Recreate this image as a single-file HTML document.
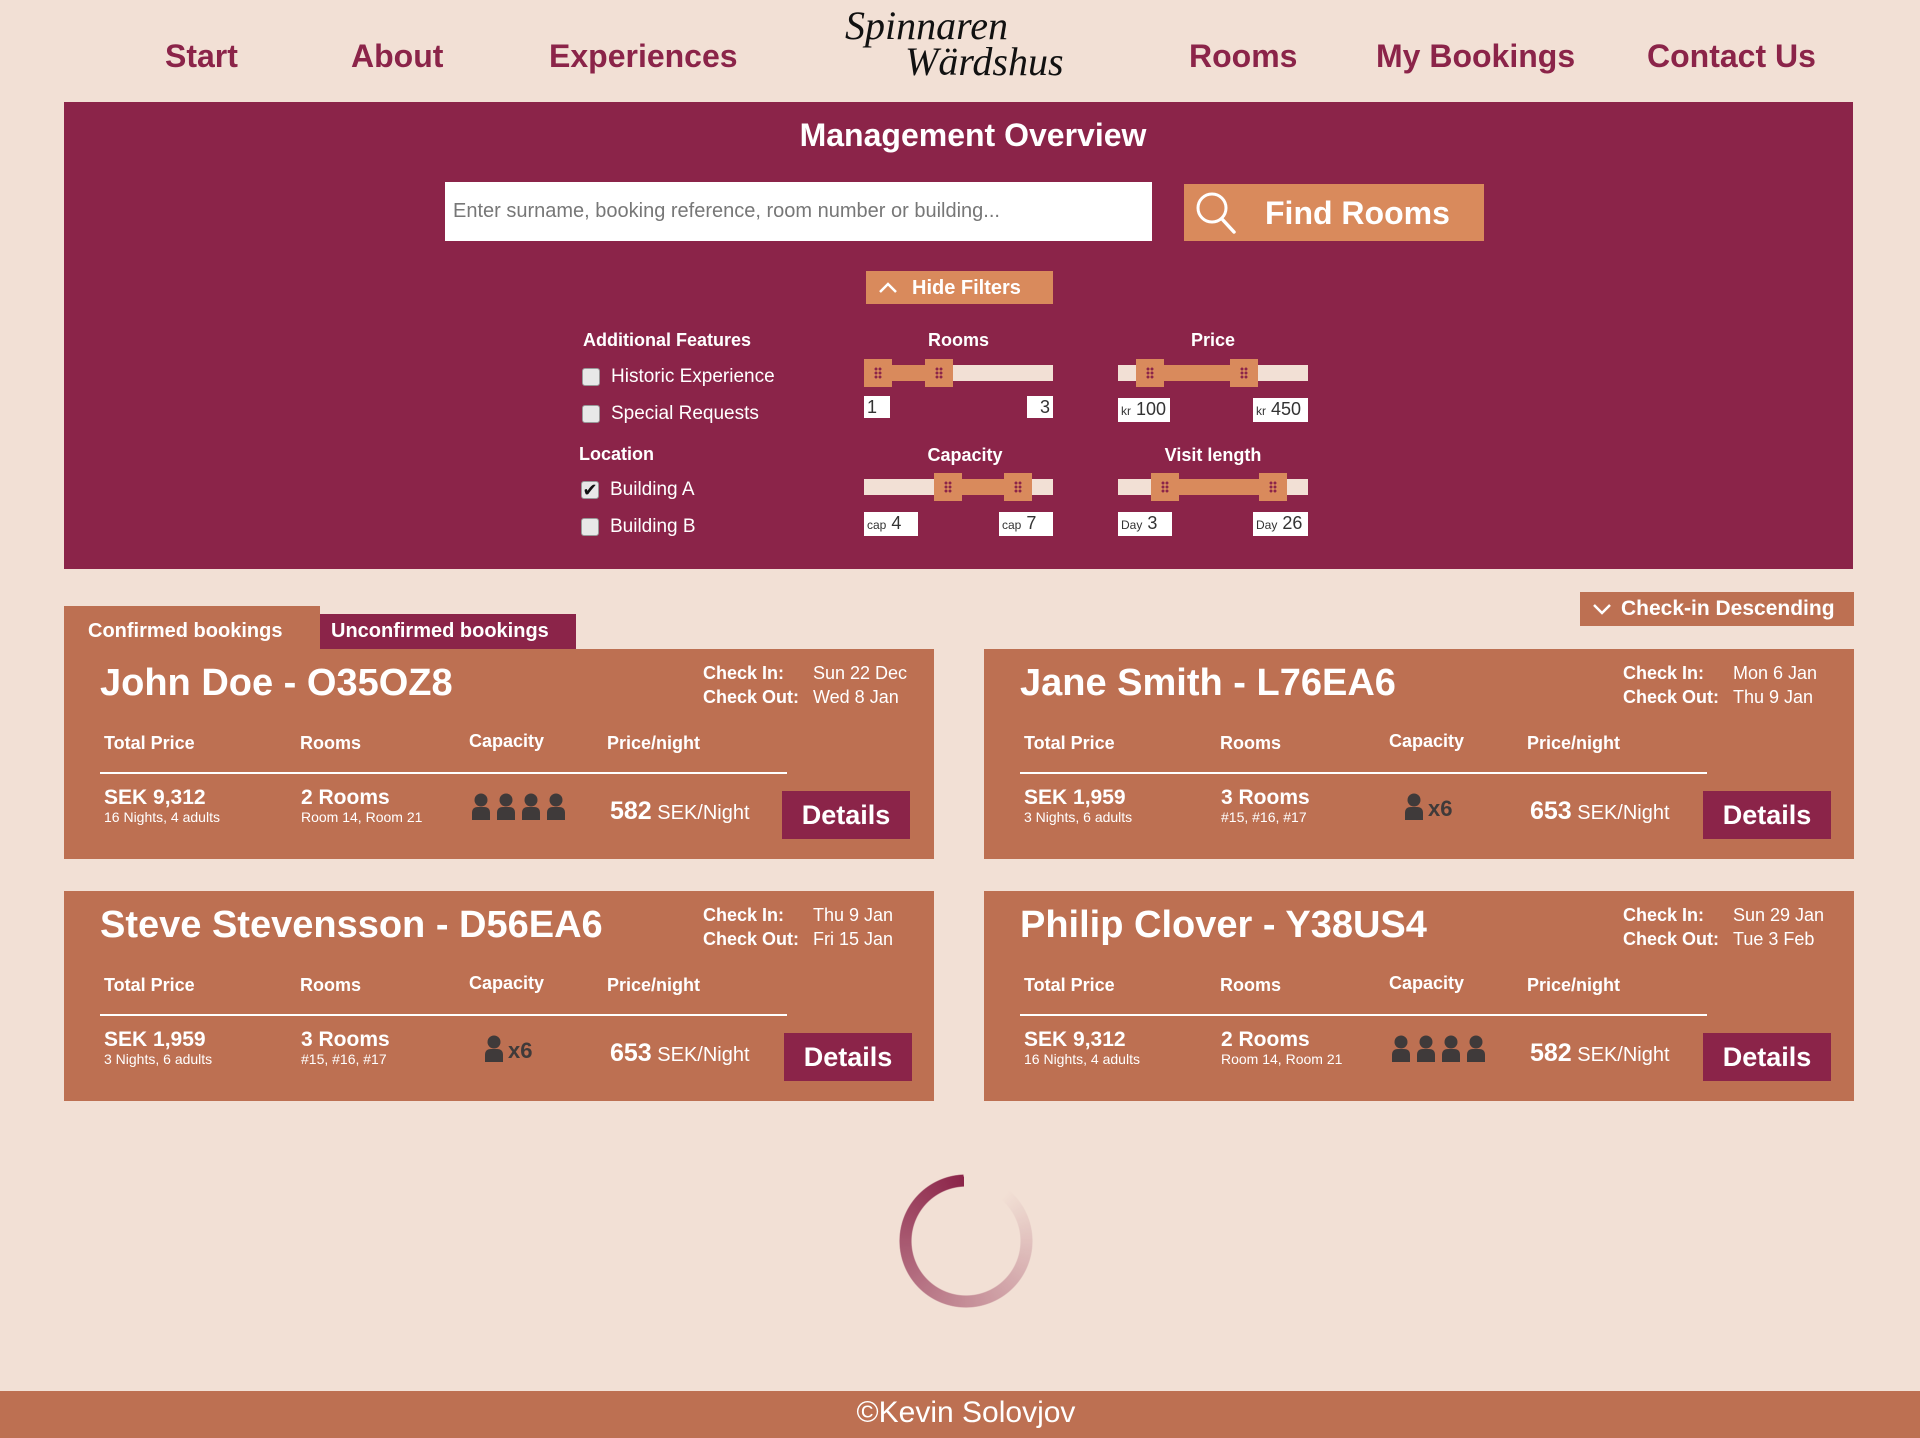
<!DOCTYPE html>
<html><head><meta charset="utf-8">
<style>
*{margin:0;padding:0;box-sizing:border-box}
body{width:1920px;height:1438px;background:#f2e0d5;font-family:"Liberation Sans",sans-serif;position:relative;overflow:hidden}
.a{position:absolute;white-space:nowrap}
.nav{color:#8b2449;font-size:32px;font-weight:bold;top:36px;line-height:40px}
.panel{left:64px;top:102px;width:1789px;height:467px;background:#8b2449}
.w{color:#fff}
.lbl{color:#fff;font-size:18px;font-weight:bold;line-height:22px}
.cb{width:18px;height:18px;background:#e8e8e8;border:1px solid #999;border-radius:3px}
.opt{color:#fff;font-size:19px;line-height:22px}
.track{background:#f2e0d5;height:16px}
.fill{background:#d98a5c;height:16px}
.h{background:#d98a5c;width:28px;height:28px}
.h::after{content:"";position:absolute;left:10px;top:8px;width:8px;height:12px;background-image:radial-gradient(circle,#8b2449 1.3px,transparent 1.6px);background-size:4px 4px}
.box{background:#fff;color:#333;font-size:18px;line-height:22px;padding:0 3px}
.box small{font-size:12px}
.card{width:870px;height:210px;background:#bd7052}
.card .t{left:36px;top:12px;font-size:38px;font-weight:bold;color:#fff;line-height:44px}
.card .ck{left:639px;font-size:18px;font-weight:bold;color:#fff;line-height:22px}
.card .cv{left:749px;font-size:18px;color:#fff;line-height:22px}
.card .hd{top:83px;font-size:18px;font-weight:bold;color:#fff;line-height:22px}
.card .ln{left:36px;top:123px;width:687px;height:2px;background:#fff}
.card .v{top:137px;font-size:21px;font-weight:bold;color:#fff;line-height:24px}
.card .s{top:160px;font-size:14px;color:#fff;line-height:16px}
.card .p{left:546px;top:148px;color:#fff;font-size:20px;line-height:28px}
.card .p b{font-size:25px}
.card .d{top:142px;width:128px;height:48px;background:#8b2449;color:#fff;font-size:27px;font-weight:bold;line-height:48px;text-align:center}
.card .x6{font-size:22px;font-weight:bold;color:#3f3a3a;line-height:28px}
</style></head><body>
<svg width="0" height="0" style="position:absolute"><defs><symbol id="pp" viewBox="0 0 20 27"><circle cx="10" cy="7" r="6.5" fill="#3f3a3a"/><path d="M1 27V20Q1 14 7 14H13Q19 14 19 20V27Z" fill="#3f3a3a"/></symbol></defs></svg>

<div class="a nav" style="left:165px">Start</div>
<div class="a nav" style="left:351px">About</div>
<div class="a nav" style="left:549px">Experiences</div>
<div class="a nav" style="left:1189px">Rooms</div>
<div class="a nav" style="left:1376px">My Bookings</div>
<div class="a nav" style="left:1647px">Contact Us</div>
<div class="a" style="left:845px;top:6px;font-family:'Liberation Serif',serif;font-style:italic;font-size:40px;line-height:40px;color:#111">Spinnaren</div>
<div class="a" style="left:905px;top:42px;font-family:'Liberation Serif',serif;font-style:italic;font-size:40px;line-height:40px;color:#111">Wärdshus</div>

<div class="a panel"></div>
<div class="a w" style="left:0;width:1946px;text-align:center;top:115px;font-size:32px;font-weight:bold;line-height:40px">Management Overview</div>
<div class="a" style="left:445px;top:182px;width:707px;height:59px;background:#fff"></div>
<div class="a" style="left:453px;top:199px;font-size:20px;color:#777;line-height:24px">Enter surname, booking reference, room number or building...</div>
<div class="a" style="left:1184px;top:184px;width:300px;height:57px;background:#d98a5c"></div>
<svg class="a" style="left:1194px;top:190px" width="44" height="46" viewBox="0 0 44 46"><circle cx="18" cy="18" r="14" fill="none" stroke="#fff" stroke-width="3"/><path d="M28 29L40 42" stroke="#fff" stroke-width="3.5" stroke-linecap="round"/></svg>
<div class="a w" style="left:1265px;top:193px;font-size:32px;font-weight:bold;line-height:40px">Find Rooms</div>
<div class="a" style="left:866px;top:271px;width:187px;height:33px;background:#d98a5c"></div>
<svg class="a" style="left:878px;top:280px" width="20" height="14"><path d="M2 12L10 4L18 12" fill="none" stroke="#fff" stroke-width="2.5"/></svg>
<div class="a w" style="left:912px;top:276px;font-size:20px;font-weight:bold;line-height:24px">Hide Filters</div>

<div class="a lbl" style="left:583px;top:329px">Additional Features</div>
<div class="a cb" style="left:582px;top:368px"></div><div class="a opt" style="left:611px;top:366px">Historic Experience</div>
<div class="a cb" style="left:582px;top:405px"></div><div class="a opt" style="left:611px;top:403px">Special Requests</div>
<div class="a lbl" style="left:579px;top:443px">Location</div>
<div class="a cb" style="left:581px;top:481px;color:#111;font-size:18px;line-height:16px;text-align:center">✔</div><div class="a opt" style="left:610px;top:479px">Building A</div>
<div class="a cb" style="left:581px;top:518px"></div><div class="a opt" style="left:610px;top:516px">Building B</div>

<div class="a lbl" style="left:864px;width:189px;text-align:center;top:329px">Rooms</div>
<div class="a track" style="left:864px;top:365px;width:189px"></div>
<div class="a fill" style="left:864px;top:365px;width:89px"></div>
<div class="a h" style="left:864px;top:359px"></div><div class="a h" style="left:925px;top:359px"></div>
<div class="a box" style="left:864px;top:396px;width:26px">1</div>
<div class="a box" style="left:1027px;top:396px;width:26px;text-align:right">3</div>

<div class="a lbl" style="left:1118px;width:190px;text-align:center;top:329px">Price</div>
<div class="a track" style="left:1118px;top:365px;width:190px"></div>
<div class="a fill" style="left:1136px;top:365px;width:122px"></div>
<div class="a h" style="left:1136px;top:359px"></div><div class="a h" style="left:1230px;top:359px"></div>
<div class="a box" style="left:1118px;top:398px;width:52px"><small>kr</small> 100</div>
<div class="a box" style="left:1253px;top:398px;width:55px"><small>kr</small> 450</div>

<div class="a lbl" style="left:864px;width:202px;text-align:center;top:444px">Capacity</div>
<div class="a track" style="left:864px;top:479px;width:189px"></div>
<div class="a fill" style="left:934px;top:479px;width:98px"></div>
<div class="a h" style="left:934px;top:473px"></div><div class="a h" style="left:1004px;top:473px"></div>
<div class="a box" style="left:864px;top:512px;width:54px"><small>cap</small> 4</div>
<div class="a box" style="left:999px;top:512px;width:54px"><small>cap</small> 7</div>

<div class="a lbl" style="left:1118px;width:190px;text-align:center;top:444px">Visit length</div>
<div class="a track" style="left:1118px;top:479px;width:190px"></div>
<div class="a fill" style="left:1151px;top:479px;width:136px"></div>
<div class="a h" style="left:1151px;top:473px"></div><div class="a h" style="left:1259px;top:473px"></div>
<div class="a box" style="left:1118px;top:512px;width:54px"><small>Day</small> 3</div>
<div class="a box" style="left:1253px;top:512px;width:55px"><small>Day</small> 26</div>

<div class="a" style="left:1580px;top:592px;width:274px;height:34px;background:#bd7052"></div>
<svg class="a" style="left:1592px;top:602px" width="20" height="14"><path d="M2 3L10 11L18 3" fill="none" stroke="#fff" stroke-width="2.5"/></svg>
<div class="a w" style="left:1621px;top:597px;font-size:21px;font-weight:bold;line-height:24px">Check-in Descending</div>

<div class="a" style="left:64px;top:606px;width:256px;height:44px;background:#bd7052"></div>
<div class="a w" style="left:88px;top:619px;font-size:20px;font-weight:bold;line-height:24px">Confirmed bookings</div>
<div class="a" style="left:320px;top:614px;width:256px;height:36px;background:#8b2449"></div>
<div class="a w" style="left:331px;top:619px;font-size:20px;font-weight:bold;line-height:24px">Unconfirmed bookings</div>

<!-- card 1 -->
<div class="a card" style="left:64px;top:649px">
<div class="a t">John Doe - O35OZ8</div>
<div class="a ck" style="top:13px">Check In:</div><div class="a cv" style="top:13px">Sun 22 Dec</div>
<div class="a ck" style="top:37px">Check Out:</div><div class="a cv" style="top:37px">Wed 8 Jan</div>
<div class="a hd" style="left:40px">Total Price</div><div class="a hd" style="left:236px">Rooms</div><div class="a hd" style="left:405px;top:81px">Capacity</div><div class="a hd" style="left:543px">Price/night</div>
<div class="a ln"></div>
<div class="a v" style="left:40px">SEK 9,312</div><div class="a s" style="left:40px">16 Nights, 4 adults</div>
<div class="a v" style="left:237px">2 Rooms</div><div class="a s" style="left:237px">Room 14, Room 21</div>
<svg class="a" style="left:407px;top:144px" width="98" height="27"><use href="#pp" x="0" width="20" height="27"/><use href="#pp" x="25" width="20" height="27"/><use href="#pp" x="50" width="20" height="27"/><use href="#pp" x="75" width="20" height="27"/></svg>
<div class="a p"><b>582</b> SEK/Night</div>
<div class="a d" style="left:718px">Details</div>
</div>

<!-- card 2 -->
<div class="a card" style="left:984px;top:649px">
<div class="a t">Jane Smith - L76EA6</div>
<div class="a ck" style="top:13px">Check In:</div><div class="a cv" style="top:13px">Mon 6 Jan</div>
<div class="a ck" style="top:37px">Check Out:</div><div class="a cv" style="top:37px">Thu 9 Jan</div>
<div class="a hd" style="left:40px">Total Price</div><div class="a hd" style="left:236px">Rooms</div><div class="a hd" style="left:405px;top:81px">Capacity</div><div class="a hd" style="left:543px">Price/night</div>
<div class="a ln"></div>
<div class="a v" style="left:40px">SEK 1,959</div><div class="a s" style="left:40px">3 Nights, 6 adults</div>
<div class="a v" style="left:237px">3 Rooms</div><div class="a s" style="left:237px">#15, #16, #17</div>
<svg class="a" style="left:420px;top:144px" width="20" height="27"><use href="#pp" width="20" height="27"/></svg><div class="a x6" style="left:444px;top:146px">x6</div>
<div class="a p"><b>653</b> SEK/Night</div>
<div class="a d" style="left:719px">Details</div>
</div>

<!-- card 3 -->
<div class="a card" style="left:64px;top:891px">
<div class="a t">Steve Stevensson - D56EA6</div>
<div class="a ck" style="top:13px">Check In:</div><div class="a cv" style="top:13px">Thu 9 Jan</div>
<div class="a ck" style="top:37px">Check Out:</div><div class="a cv" style="top:37px">Fri 15 Jan</div>
<div class="a hd" style="left:40px">Total Price</div><div class="a hd" style="left:236px">Rooms</div><div class="a hd" style="left:405px;top:81px">Capacity</div><div class="a hd" style="left:543px">Price/night</div>
<div class="a ln"></div>
<div class="a v" style="left:40px">SEK 1,959</div><div class="a s" style="left:40px">3 Nights, 6 adults</div>
<div class="a v" style="left:237px">3 Rooms</div><div class="a s" style="left:237px">#15, #16, #17</div>
<svg class="a" style="left:420px;top:144px" width="20" height="27"><use href="#pp" width="20" height="27"/></svg><div class="a x6" style="left:444px;top:146px">x6</div>
<div class="a p"><b>653</b> SEK/Night</div>
<div class="a d" style="left:720px">Details</div>
</div>

<!-- card 4 -->
<div class="a card" style="left:984px;top:891px">
<div class="a t">Philip Clover - Y38US4</div>
<div class="a ck" style="top:13px">Check In:</div><div class="a cv" style="top:13px">Sun 29 Jan</div>
<div class="a ck" style="top:37px">Check Out:</div><div class="a cv" style="top:37px">Tue 3 Feb</div>
<div class="a hd" style="left:40px">Total Price</div><div class="a hd" style="left:236px">Rooms</div><div class="a hd" style="left:405px;top:81px">Capacity</div><div class="a hd" style="left:543px">Price/night</div>
<div class="a ln"></div>
<div class="a v" style="left:40px">SEK 9,312</div><div class="a s" style="left:40px">16 Nights, 4 adults</div>
<div class="a v" style="left:237px">2 Rooms</div><div class="a s" style="left:237px">Room 14, Room 21</div>
<svg class="a" style="left:407px;top:144px" width="98" height="27"><use href="#pp" x="0" width="20" height="27"/><use href="#pp" x="25" width="20" height="27"/><use href="#pp" x="50" width="20" height="27"/><use href="#pp" x="75" width="20" height="27"/></svg>
<div class="a p"><b>582</b> SEK/Night</div>
<div class="a d" style="left:719px">Details</div>
</div>

<div class="a" style="left:899px;top:1174px;width:134px;height:134px;border-radius:50%;background:conic-gradient(from 40deg,rgba(139,36,73,0) 0deg,rgba(139,36,73,1) 318deg,rgba(139,36,73,0) 318deg);-webkit-mask:radial-gradient(circle,transparent 54px,#000 55px,#000 66px,transparent 67px);mask:radial-gradient(circle,transparent 54px,#000 55px,#000 66px,transparent 67px)"></div>

<div class="a" style="left:0;top:1391px;width:1920px;height:47px;background:#bd7052"></div>
<div class="a w" style="left:0;width:1932px;text-align:center;top:1394px;font-size:30px;line-height:38px">©Kevin Solovjov</div>
</body></html>
